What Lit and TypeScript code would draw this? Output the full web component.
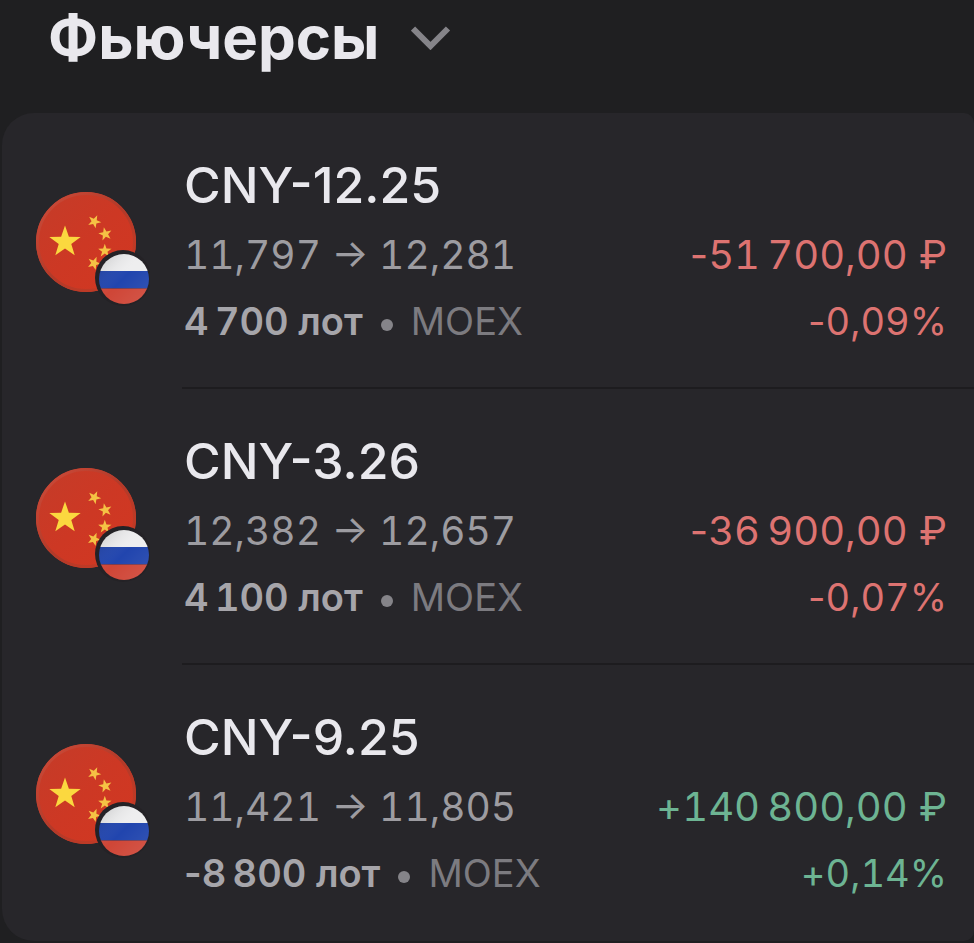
import { LitElement, html, css, svg } from "lit";
import { customElement, property } from "lit/decorators.js";

interface Position {
  name: string;
  from: string;
  to: string;
  lots: string;
  exchange: string;
  profit: string;
  percent: string;
}

const POSITIONS: Position[] = [
  { name: "CNY-12.25", from: "11,797", to: "12,281", lots: "4\u2009700 лот", exchange: "MOEX", profit: "-51\u2009700,00 ₽", percent: "-0,09%" },
  { name: "CNY-3.26", from: "12,382", to: "12,657", lots: "4\u2009100 лот", exchange: "MOEX", profit: "-36\u2009900,00 ₽", percent: "-0,07%" },
  { name: "CNY-9.25", from: "11,421", to: "11,805", lots: "-8\u2009800 лот", exchange: "MOEX", profit: "+140\u2009800,00 ₽", percent: "+0,14%" },
];

/** Points of a five-pointed star, turned by the given number of degrees. */
function star(cx: number, cy: number, r: number, turn = 0): string {
  const points: string[] = [];
  for (let i = 0; i < 10; i++) {
    const radius = i % 2 ? r * 0.4 : r;
    const a = ((i * 36 - 90 + turn) * Math.PI) / 180;
    points.push(`${(cx + radius * Math.cos(a)).toFixed(2)},${(cy + radius * Math.sin(a)).toFixed(2)}`);
  }
  return points.join(" ");
}

/** Sets the digits in tabular figures and leaves a leading sign and the unit proportional. */
function figures(text: string) {
  const [, sign, digits, unit] = /^([+-]?)([\d,\u2009]+)(.*)$/.exec(text)!;
  return html`${sign}<span class="digits">${digits}</span>${unit}`;
}

@customElement("currency-flags")
export class CurrencyFlags extends LitElement {
  static styles = css`
    :host {
      display: block;
    }
    .flags {
      display: block;
      width: 114px;
      height: 114px;
    }
  `;

  render() {
    return html`
      <svg class="flags" viewBox="0 0 114 114" aria-hidden="true">
        <defs>
          <linearGradient id="cn" x1="0" y1="0" x2="1" y2="1">
            <stop offset="0" stop-color="#c43c29" />
            <stop offset="0.5" stop-color="#cd3824" />
            <stop offset="1" stop-color="#d23721" />
          </linearGradient>
          <linearGradient id="rim" x1="0" y1="0" x2="1" y2="1">
            <stop offset="0" stop-color="#cf4c3a" />
            <stop offset="0.5" stop-color="#b23a29" />
            <stop offset="1" stop-color="#c83a24" />
          </linearGradient>
          <linearGradient id="shine" x1="0" y1="0" x2="1" y2="1">
            <stop offset="0.1" stop-color="#000" stop-opacity="0.14" />
            <stop offset="0.5" stop-color="#fff" stop-opacity="0" />
            <stop offset="0.9" stop-color="#fff" stop-opacity="0.08" />
          </linearGradient>
          <clipPath id="ru"><circle cx="88" cy="87" r="25" /></clipPath>
        </defs>
        <circle cx="50" cy="50" r="50" fill="url(#cn)" />
        <circle cx="50" cy="50" r="48.5" fill="none" stroke="url(#rim)" stroke-width="3" />
        ${svg`
          <polygon points=${star(29, 50, 16.5)} fill="#fbd83f" />
          <polygon points=${star(58.3, 29.5, 7, 25)} fill="#f5c244" />
          <polygon points=${star(69.3, 42, 7, -12)} fill="#f5c244" />
          <polygon points=${star(68.8, 58.8, 7, 0)} fill="#f5c244" />
          <polygon points=${star(58, 71.3, 7, 22)} fill="#f5c244" />
        `}
        <circle cx="87" cy="86" r="28" fill="#242226" />
        <g clip-path="url(#ru)">
          <rect x="60" y="60" width="54" height="19" fill="#eeeeef" />
          <rect x="60" y="79" width="54" height="17.5" fill="#2145ae" />
          <rect x="60" y="96.5" width="54" height="17.5" fill="#cf4637" />
          <rect x="60" y="60" width="54" height="54" fill="url(#shine)" />
        </g>
      </svg>
    `;
  }
}

@customElement("position-row")
export class PositionRow extends LitElement {
  @property({ attribute: false }) position!: Position;

  static styles = css`
    :host {
      display: flex;
      padding-left: 34px;
    }
    .icon {
      flex: none;
      width: 146px;
      padding-top: 79px;
      box-sizing: border-box;
    }
    .body {
      flex: 1;
      min-width: 0;
      padding: 44px 27px 32px 2px;
      border-bottom: 2px solid #1d1c1f;
    }
    :host([last]) .body {
      border-bottom-color: transparent;
    }
    .name {
      margin: 0 0 8px;
      font-size: 50px;
      line-height: 56px;
      font-weight: 500;
      color: #e9e8ed;
    }
    .line {
      display: flex;
      justify-content: space-between;
      align-items: baseline;
      line-height: 67px;
      white-space: nowrap;
    }
    .price {
      font-size: 39px;
      color: #9d9ca1;
      font-variant-numeric: tabular-nums;
    }
    .holding {
      font-size: 38px;
      color: #7c7b80;
    }
    .lots {
      font-weight: 600;
      color: #a6a5aa;
    }
    .dot {
      display: inline-block;
      width: 12px;
      height: 12px;
      margin: 0 18px;
      border-radius: 50%;
      vertical-align: middle;
      background: #858489;
    }
    .profit {
      font-size: 40px;
    }
    .percent {
      font-size: 38px;
    }
    .digits {
      font-variant-numeric: tabular-nums;
    }
    .down {
      color: #dd7371;
    }
    .up {
      color: #6db493;
    }
  `;

  render() {
    const p = this.position;
    const tone = p.profit.startsWith("-") ? "down" : "up";
    return html`
      <div class="icon"><currency-flags></currency-flags></div>
      <div class="body">
        <h2 class="name">${p.name}</h2>
        <div class="line">
          <span class="price">${p.from} → ${p.to}</span>
          <span class="profit ${tone}">${figures(p.profit)}</span>
        </div>
        <div class="line">
          <span class="holding"><span class="lots">${figures(p.lots)}</span><span class="dot"></span>${p.exchange}</span>
          <span class="percent ${tone}">${figures(p.percent)}</span>
        </div>
      </div>
    `;
  }
}

@customElement("app-root")
export class AppRoot extends LitElement {
  static styles = css`
    :host {
      display: block;
      box-sizing: border-box;
      min-height: 100vh;
      padding-bottom: 2px;
      overflow: hidden;
      background: #1f1f21;
      font-family: Inter, "Noto Sans", sans-serif;
    }
    .heading {
      margin: 0;
      padding: 0 0 39px 48px;
      font-size: 60px;
      line-height: 74px;
    }
    .toggle {
      display: flex;
      align-items: center;
      gap: 32px;
      padding: 0;
      border: 0;
      background: none;
      color: #e9e8ed;
      font: inherit;
      font-weight: 700;
      cursor: pointer;
    }
    .chevron {
      width: 40px;
      height: 26px;
    }
    .card {
      margin: 0 0 0 2px;
      padding: 0;
      list-style: none;
      border-radius: 32px 10px 10px 32px;
      background: #27262a;
    }
  `;

  render() {
    return html`
      <h1 class="heading">
        <button class="toggle" type="button" aria-expanded="true">
          Фьючерсы
          <svg class="chevron" viewBox="0 0 40 26" aria-hidden="true">
            <path d="M2 4.5 L19.5 22 L37 4.5" fill="none" stroke="#858489" stroke-width="6" />
          </svg>
        </button>
      </h1>
      <ul class="card">
        ${POSITIONS.map(
          (p, i) => html`<li><position-row .position=${p} ?last=${i === POSITIONS.length - 1}></position-row></li>`
        )}
      </ul>
    `;
  }
}
